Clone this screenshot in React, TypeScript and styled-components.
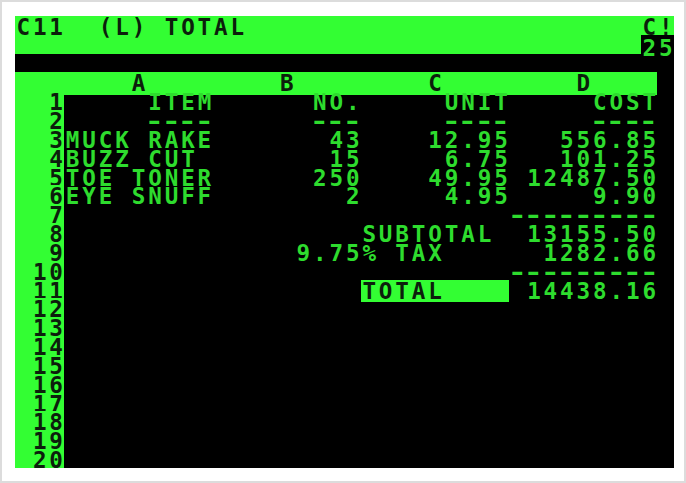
import styled, { createGlobalStyle } from 'styled-components';

// Apple II screen: 40 x 24 character cells
const CW = 659 / 40;
const LH = 452 / 24;
const FS = 22.6;
const LS = CW - FS * 0.60205;

const GREEN = '#33fe33';
const INK = '#0c1f0c';
const GLOW = '#2edc2e';

const GlobalStyle = createGlobalStyle`
  html, body {
    margin: 0;
    padding: 0;
    background: #ffffff;
  }
`;

const Frame = styled.div`
  box-sizing: border-box;
  width: 686px;
  height: 483px;
  border: 2px solid #dcdcdc;
  background: #ffffff;
  padding: 14px 10px 13px 13px;
`;

const Screen = styled.div`
  width: 659px;
  height: 452px;
  background: #000000;
  font-family: 'DejaVu Sans Mono', 'Liberation Mono', monospace;
  font-size: ${FS}px;
  font-weight: 700;
  letter-spacing: ${LS}px;
  white-space: pre;
  overflow: hidden;
`;

const Line = styled.div<{ $bg: string; $fg: string }>`
  height: ${LH}px;
  display: flex;
  justify-content: space-between;
  background: ${(p) => p.$bg};
  color: ${(p) => p.$fg};
`;

const Badge = styled.span`
  margin-left: auto;
  width: ${2 * CW}px;
  background: #000000;
  color: ${GLOW};
`;

// glyphs sit ~2px lower in their cell than the font's own line box
const Txt = styled.span`
  line-height: ${LH + 4}px;
  padding-left: ${LS / 2}px;
  margin-right: ${-LS / 2}px;
`;

const Dash = styled.span`
  display: inline-block;
  transform: scaleX(1.4);
`;

const Grid = styled.div`
  display: grid;
  grid-template-columns: ${3 * CW}px repeat(4, ${9 * CW}px) ${CW}px;
  height: ${LH}px;
`;

const HeadCell = styled.div<{ $edge?: boolean }>`
  display: flex;
  justify-content: center;
  background: ${(p) => (p.$edge ? '#000000' : GREEN)};
  color: ${INK};
`;

const RowNum = styled.div`
  display: flex;
  justify-content: flex-end;
  background: ${GREEN};
  color: ${INK};
`;

const Cell = styled.div<{ $right?: boolean; $hl?: boolean }>`
  display: flex;
  justify-content: ${(p) => (p.$right ? 'flex-end' : 'flex-start')};
  background: ${(p) => (p.$hl ? GREEN : 'transparent')};
  color: ${(p) => (p.$hl ? INK : GLOW)};
`;

type CellData = { t: string; right?: boolean; hl?: boolean };

const L = (t: string): CellData => ({ t });
const R = (t: string): CellData => ({ t, right: true });
const _ = L('');

const sheet: CellData[][] = [
  [R('ITEM'), R('NO.'), R('UNIT'), R('COST')],
  [R('----'), R('---'), R('----'), R('----')],
  [L('MUCK RAKE'), R('43'), R('12.95'), R('556.85')],
  [L('BUZZ CUT'), R('15'), R('6.75'), R('101.25')],
  [L('TOE TONER'), R('250'), R('49.95'), R('12487.50')],
  [L('EYE SNUFF'), R('2'), R('4.95'), R('9.90')],
  [_, _, _, L('---------')],
  [_, _, L('SUBTOTAL'), R('13155.50')],
  [_, R('9.75'), L('% TAX'), R('1282.66')],
  [_, _, _, L('---------')],
  [_, _, { t: 'TOTAL', hl: true }, R('14438.16')],
];

const rows = Array.from({ length: 20 }, (_r, i) => sheet[i] ?? [_, _, _, _]);

function CellText({ t }: { t: string }) {
  // the Apple II dash is nearly as wide as a letter
  if (t && /^-+$/.test(t)) {
    return (
      <Txt>
        {t.split('').map((c, k) => (
          <Dash key={k}>{c}</Dash>
        ))}
      </Txt>
    );
  }
  return <Txt>{t}</Txt>;
}

export default function App() {
  return (
    <>
      <GlobalStyle />
      <Frame>
        <Screen>
          <Line $bg={GREEN} $fg={INK}>
            <Txt>C11  (L) TOTAL</Txt>
            <Txt>C!</Txt>
          </Line>
          <Line $bg={GREEN} $fg={INK}>
            <Badge>
              <Txt>25</Txt>
            </Badge>
          </Line>
          <Line $bg='#000000' $fg={GLOW} />
          <Grid>
            <HeadCell />
            {['A', 'B', 'C', 'D'].map((col) => (
              <HeadCell key={col}>
                <Txt>{col}</Txt>
              </HeadCell>
            ))}
            <HeadCell $edge />
          </Grid>
          {rows.map((row, i) => (
            <Grid key={i}>
              <RowNum>
                <Txt>{i + 1}</Txt>
              </RowNum>
              {row.map((cell, j) => (
                <Cell key={j} $right={cell.right} $hl={cell.hl}>
                  <CellText t={cell.t} />
                </Cell>
              ))}
              <div />
            </Grid>
          ))}
        </Screen>
      </Frame>
    </>
  );
}
